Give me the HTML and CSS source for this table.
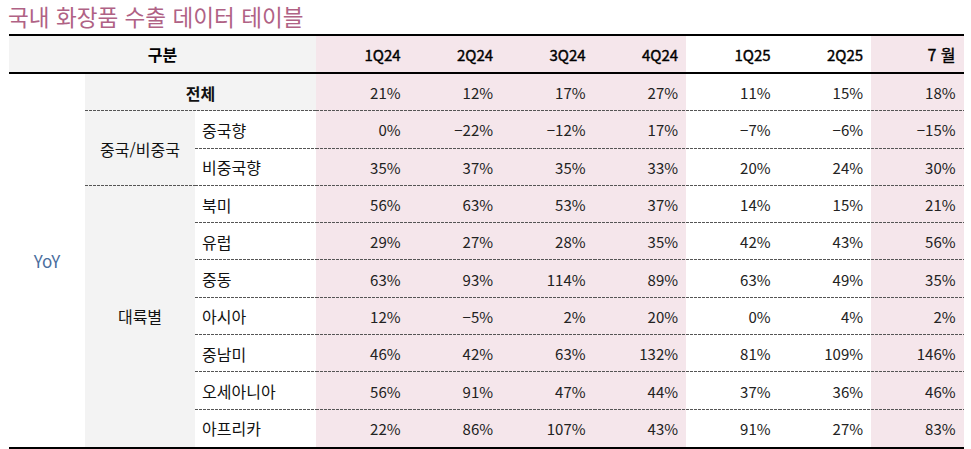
FILE: index.html
```html
<!DOCTYPE html>
<html lang="ko">
<head>
<meta charset="utf-8">
<title>국내 화장품 수출 데이터 테이블</title>
<link rel="stylesheet" href="styles.css">
</head>
<body>
<h1 class="title">국내 화장품 수출 데이터 테이블</h1>
<table class="tbl">
  <colgroup>
    <col class="c-yoy"><col class="c-grp"><col class="c-sub">
    <col class="c-q pink"><col class="c-q pink"><col class="c-q pink"><col class="c-q pink">
    <col class="c-q"><col class="c-q"><col class="c-q pink">
  </colgroup>
  <thead>
    <tr>
      <th colspan="3" class="h-label">구분</th>
      <th>1Q24</th><th>2Q24</th><th>3Q24</th><th>4Q24</th><th>1Q25</th><th>2Q25</th><th class="h-month">7 월</th>
    </tr>
  </thead>
  <tbody>
    <tr class="dl">
      <td rowspan="10" class="yoy nd">YoY</td>
      <td colspan="2" class="total">전체</td>
      <td>21%</td><td>12%</td><td>17%</td><td>27%</td><td>11%</td><td>15%</td><td>18%</td>
    </tr>
    <tr class="dl">
      <td rowspan="2" class="grp">중국/비중국</td>
      <td class="sub">중국향</td>
      <td>0%</td><td>−22%</td><td>−12%</td><td>17%</td><td>−7%</td><td>−6%</td><td>−15%</td>
    </tr>
    <tr class="dl">
      <td class="sub">비중국향</td>
      <td>35%</td><td>37%</td><td>35%</td><td>33%</td><td>20%</td><td>24%</td><td>30%</td>
    </tr>
    <tr class="dl">
      <td rowspan="7" class="grp nd">대륙별</td>
      <td class="sub">북미</td>
      <td>56%</td><td>63%</td><td>53%</td><td>37%</td><td>14%</td><td>15%</td><td>21%</td>
    </tr>
    <tr class="dl">
      <td class="sub">유럽</td>
      <td>29%</td><td>27%</td><td>28%</td><td>35%</td><td>42%</td><td>43%</td><td>56%</td>
    </tr>
    <tr class="dl">
      <td class="sub">중동</td>
      <td>63%</td><td>93%</td><td>114%</td><td>89%</td><td>63%</td><td>49%</td><td>35%</td>
    </tr>
    <tr class="dl">
      <td class="sub">아시아</td>
      <td>12%</td><td>−5%</td><td>2%</td><td>20%</td><td>0%</td><td>4%</td><td>2%</td>
    </tr>
    <tr class="dl">
      <td class="sub">중남미</td>
      <td>46%</td><td>42%</td><td>63%</td><td>132%</td><td>81%</td><td>109%</td><td>146%</td>
    </tr>
    <tr class="dl">
      <td class="sub">오세아니아</td>
      <td>56%</td><td>91%</td><td>47%</td><td>44%</td><td>37%</td><td>36%</td><td>46%</td>
    </tr>
    <tr>
      <td class="sub">아프리카</td>
      <td>22%</td><td>86%</td><td>107%</td><td>43%</td><td>91%</td><td>27%</td><td>83%</td>
    </tr>
  </tbody>
</table>
</body>
</html>
```
FILE: styles.css
```css
html, body {
  margin: 0;
  padding: 0;
  background: #ffffff;
}
body {
  padding: 3px 9px 0 9px;
  font-family: "Noto Sans CJK KR", "Noto Sans", sans-serif;
  color: #1a1a1a;
}
.title {
  margin: 0 0 3px -1px;
  font-size: 22.6px;
  line-height: 28px;
  font-weight: 400;
  color: #b06285;
}
.tbl {
  width: 953px;
  table-layout: fixed;
  border-collapse: separate;
  border-spacing: 0;
  border-top: 2px solid #000;
  border-bottom: 2px solid #000;
  font-size: 15px;
}
.c-yoy { width: 76px; }
.c-grp { width: 110px; }
.c-sub { width: 121px; }
.c-q { width: 92.5px; }
.pink { background: #f5e6eb; }

th, td {
  padding: 0 8px;
  text-align: right;
  vertical-align: middle;
  white-space: nowrap;
}
thead th {
  height: 36px;
  border-bottom: 2px solid #000;
  font-weight: 400;
  color: #000;
  -webkit-text-stroke: 0.4px #000;
}
thead th.h-label {
  background: #f3f3f3;
  text-align: center;
  font-weight: 700;
  font-size: 16px;
  -webkit-text-stroke: 0;
}
thead th.h-month {
  font-size: 16px;
}
tbody tr { height: 37.3px; }
tbody td { color: #222; }

tr.dl td:not(.nd) {
  background-image: repeating-linear-gradient(90deg, #555 0 3px, transparent 3px 4px);
  background-repeat: no-repeat;
  background-position: left bottom;
  background-size: 100% 1px;
}
td.yoy {
  text-align: center;
  font-size: 17px;
  color: #4a6e9e;
  background-color: #fff;
}
td.total {
  text-align: center;
  font-size: 16px;
  font-weight: 700;
  color: #111;
  background-color: #f3f3f3;
}
td.grp {
  text-align: center;
  font-size: 16px;
  color: #111;
  background-color: #f3f3f3;
}
td.sub {
  text-align: left;
  padding-left: 7px;
  font-size: 16px;
  color: #111;
  background-color: #fff;
}
```
